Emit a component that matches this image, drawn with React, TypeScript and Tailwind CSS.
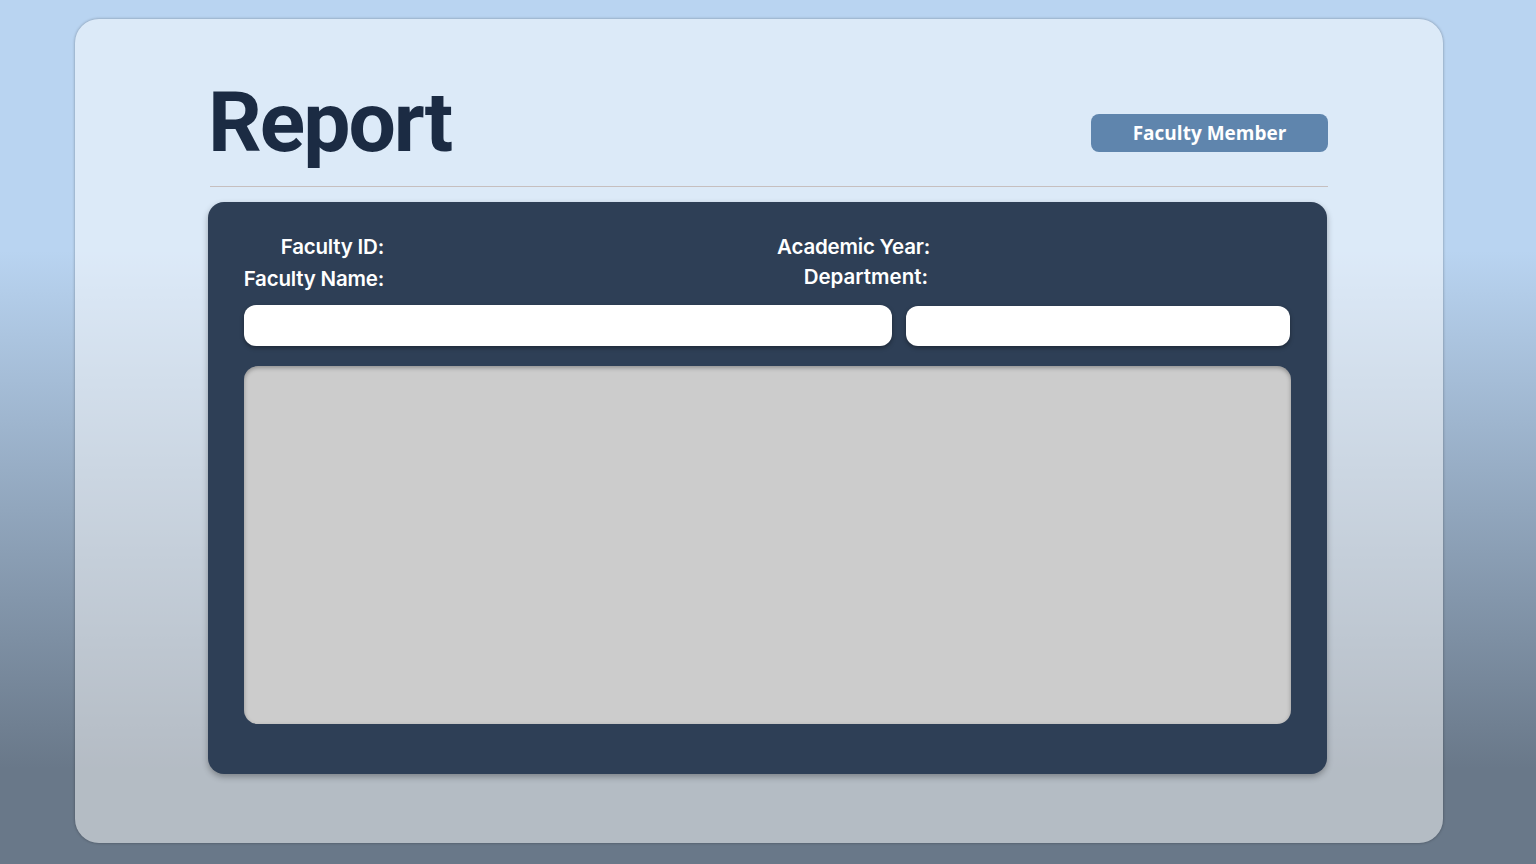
import React from 'react';

const App = () => {
  return (
    <div className="min-h-screen w-full bg-[linear-gradient(to_bottom,#b9d4f1_0%,#b9d4f1_29%,#697889_89%,#697889_100%)] pt-[19px] pb-[21px]">
      <div className="ml-[75px] h-[824px] w-[1368px] rounded-[24px] bg-white/50 pl-[133px] pr-[116px] pt-[62px] shadow-[0_0_3px_rgba(0,0,0,0.35)]">
        {/* header */}
        <div className="flex items-start justify-between">
          <h1 className="font-['Roboto',sans-serif] text-[84px] leading-none font-bold tracking-[-2px] text-[#1b2b43]">
            Report
          </h1>
          <div className="mt-[33px] -mr-px flex h-[38px] w-[237px] items-center justify-center rounded-[8px] bg-[#5f85ad] font-['Open_Sans',sans-serif] text-[19px] font-bold text-white">
            Faculty Member
          </div>
        </div>
        <div className="mt-[21px] ml-[2px] -mr-px h-px bg-[#c6bfbf]"></div>

        {/* details panel */}
        <div className="mt-[15px] h-[572px] rounded-[16px] bg-[#2e3f56] px-[36px] pt-[30px] shadow-[0_3px_6px_rgba(0,0,0,0.3)]">
          <div className="flex font-['Inter',sans-serif] text-[20.5px] font-semibold tracking-[-0.2px] whitespace-nowrap text-white">
            <div className="flex w-[140px] shrink-0 flex-col items-end">
              <span className="-mt-px leading-[31px]">Faculty ID:</span>
              <span className="leading-[33px]">Faculty Name:</span>
            </div>
            <div className="ml-[394px] flex w-[152px] shrink-0 flex-col items-end">
              <span className="leading-[29px]">Academic Year:</span>
              <span className="pr-[2px] leading-[31px] tracking-[0px]">Department:</span>
            </div>
          </div>

          <div className="mt-[10px] flex gap-[14px]">
            <div className="h-[41px] w-[648px] rounded-[12px] bg-white shadow-[0_2px_4px_rgba(0,0,0,0.35)]"></div>
            <div className="mt-px h-[40px] w-[384px] rounded-[12px] bg-white shadow-[0_2px_4px_rgba(0,0,0,0.35)]"></div>
          </div>

          <div className="mt-[20px] h-[358px] rounded-[14px] bg-[#cccccc] shadow-[inset_0_2px_4px_rgba(0,0,0,0.3)]"></div>
        </div>
      </div>
    </div>
  );
};

export default App;
